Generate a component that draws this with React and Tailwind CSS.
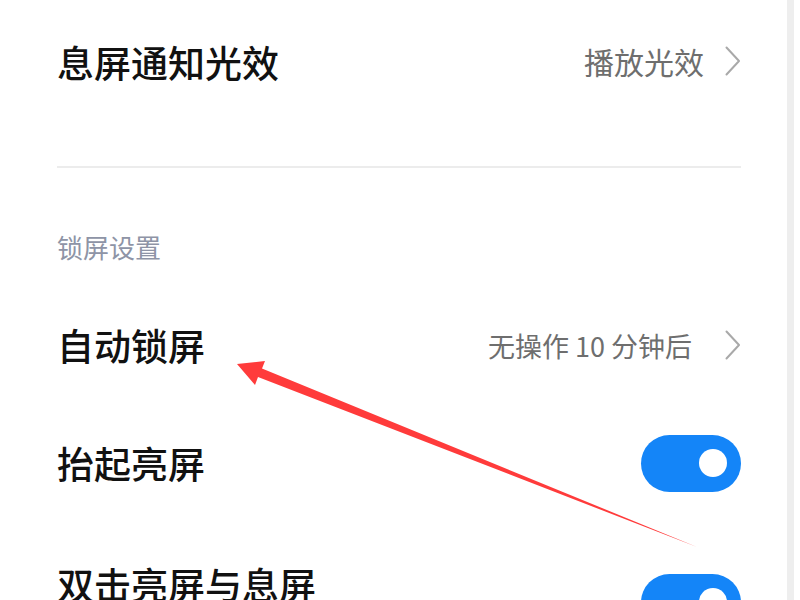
import React from "react";

const font = { fontFamily: '"Noto Sans CJK SC", "Noto Sans", sans-serif' };

function Chevron() {
  return (
    <svg width="16" height="30" viewBox="0 0 16 30" className="shrink-0">
      <polyline points="1.5,1.5 14,15 1.5,28.5" fill="none" stroke="#a9a9a9" strokeWidth="2" strokeLinecap="round" strokeLinejoin="round" />
    </svg>
  );
}

function Toggle() {
  return (
    <div className="w-[100px] h-[57px] rounded-full bg-[#1485f8] flex items-center justify-end pr-[14px] shrink-0">
      <div className="w-[28px] h-[28px] rounded-full bg-white" />
    </div>
  );
}

export default function App() {
  return (
    <div className="relative w-[800px] h-[600px] overflow-hidden bg-white flex" style={font}>
      <div className="flex-1 flex flex-col pl-[57px] pr-[46px]">
        <div className="h-[124px] shrink-0 flex items-center justify-between">
          <span className="text-[37px] leading-none font-medium text-[#111]">息屏通知光效</span>
          <div className="flex items-center pb-[2px]">
            <span className="text-[30px] leading-none text-[#6e6e6e] mr-[21px]">播放光效</span>
            <Chevron />
          </div>
        </div>
        <div className="mt-[42px] h-[2px] bg-[#ececec] shrink-0" />
        <div className="h-[118px] shrink-0 pt-[66px]">
          <span className="block text-[26px] leading-[26px] text-[#8e94a6]">锁屏设置</span>
        </div>
        <div className="h-[118px] shrink-0 flex items-center justify-between">
          <span className="text-[37px] leading-none font-medium text-[#111]">自动锁屏</span>
          <div className="flex items-center">
            <span className="text-[27px] leading-none text-[#6e6e6e] mr-[33px]">无操作 10 分钟后</span>
            <Chevron />
          </div>
        </div>
        <div className="h-[118px] shrink-0 flex items-center justify-between">
          <span className="text-[37px] leading-none font-medium text-[#111]">抬起亮屏</span>
          <Toggle />
        </div>
        <div className="h-[160px] shrink-0 flex items-center justify-between">
          <div className="pb-[34px]">
            <span className="text-[37px] leading-none font-medium text-[#111]">双击亮屏与息屏</span>
          </div>
          <Toggle />
        </div>
      </div>
      <div className="w-[7px] bg-[#eeeeee] shrink-0" />
      <div className="w-[6px] bg-white shrink-0" />

      <svg className="absolute inset-0 pointer-events-none" width="800" height="600" viewBox="0 0 800 600">
        <polygon
          points="237,364 265,361 262,368.5 697,547 258,377 255,385"
          fill="#ff3b3b"
        />
      </svg>
    </div>
  );
}
